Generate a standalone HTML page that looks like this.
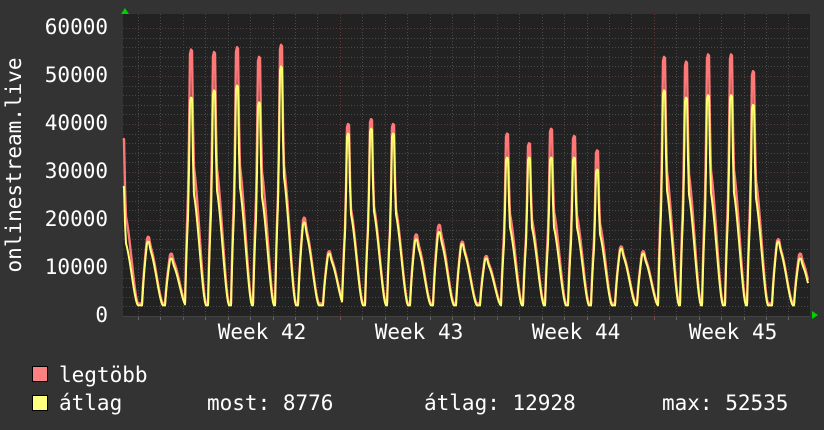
<!DOCTYPE html>
<html><head><meta charset="utf-8"><style>
html,body{margin:0;padding:0;background:#333;}
body{width:824px;height:430px;overflow:hidden;position:relative;font-family:"DejaVu Sans Mono","Liberation Mono",monospace;}
svg{position:absolute;left:0;top:0}
</style></head><body>
<svg id="g" width="824" height="430" xmlns="http://www.w3.org/2000/svg">
<rect x="0" y="0" width="824" height="430" fill="#333"/>
<rect x="123" y="14" width="687" height="302" fill="#222"/>
<g id="grid"></g>
<g id="data"></g>
<g fill="#fff" font-family="DejaVu Sans Mono, Liberation Mono, monospace" font-size="21">
<text x="108" y="34" text-anchor="end">60000</text>
<text x="108" y="82" text-anchor="end">50000</text>
<text x="108" y="130" text-anchor="end">40000</text>
<text x="108" y="178" text-anchor="end">30000</text>
<text x="108" y="226" text-anchor="end">20000</text>
<text x="108" y="274" text-anchor="end">10000</text>
<text x="108" y="322" text-anchor="end">0</text>
<text x="262" y="339" text-anchor="middle">Week 42</text>
<text x="419" y="339" text-anchor="middle">Week 43</text>
<text x="576" y="339" text-anchor="middle">Week 44</text>
<text x="733" y="339" text-anchor="middle">Week 45</text>
<text transform="translate(21,165) rotate(-90)" text-anchor="middle">onlinestream.live</text>
<text x="59" y="382">legtöbb</text>
<text x="59" y="410">átlag</text>
<text x="207" y="410">most: 8776</text>
<text x="424" y="410">átlag: 12928</text>
<text x="662" y="410">max: 52535</text>
</g>
<rect x="32.5" y="366.5" width="15" height="15" fill="#ff8080" stroke="#000"/>
<rect x="32.5" y="395.5" width="15" height="15" fill="#ffff80" stroke="#000"/>
<polygon points="125,8 121,14 129,14" fill="#00d000"/>
<polygon points="818,315 812,311 812,319" fill="#00d000"/>
</svg>
<script>
var NS="http://www.w3.org/2000/svg";
function el(p,t,a){var e=document.createElementNS(NS,t);for(var k in a)e.setAttribute(k,a[k]);p.appendChild(e);return e;}
var grid=document.getElementById('grid'),data=document.getElementById('data');
var sc=288/60000;function Y(v){return 316-v*sc;}
for(var v=2000;v<=60000;v+=2000){var y=Math.round(Y(v))+.5;el(grid,'line',{x1:123,x2:810,y1:y,y2:y,stroke:(v%10000==0)?'#5a3a3a':'#4a4a4a','stroke-dasharray':'1,2'});}
var weeks=[182,339,496,653];
for(var x=138;x<810;x+=22.43){var xx=Math.round(x)+.5;var maj=weeks.some(function(w){return Math.abs(w-x)<3});
el(grid,'line',{x1:xx,x2:xx,y1:14,y2:316,stroke:maj?'#6a3535':'#4a4a4a','stroke-dasharray':'1,2'});
el(grid,'line',{x1:xx,x2:xx,y1:316,y2:320,stroke:maj?'#a04040':'#666'});}
el(grid,'line',{x1:123,x2:810,y1:316.5,y2:316.5,stroke:'#444'});
var P=[[123,37000,27000],[148,16500,15500],[171,13000,12000],[191,55500,45500],[214,55000,47000],[237,56000,48000],[259,54000,44500],[281,56500,52000],[304,20500,19500],[329,13500,13000],[348,40000,38000],[371,41000,39000],[393,40000,38000],[416,17000,16000],[439,19000,17500],[462,15500,15000],[486,12500,12000],[507,38000,33000],[529,36000,33000],[551,39000,33000],[574,37500,33000],[597,34500,30500],[621,14500,14000],[643,13500,13000],[664,54000,47000],[686,53000,45500],[708,54500,46000],[731,54500,46000],[753,51000,44000],[778,16000,15500],[800,13000,12000],[822,12000,11000]];
function val(x,k,mn){var best=mn;for(var i=0;i<P.length;i++){var p=P[i],d=x-p[0],A=p[k];var big=A>25000;
var base=big?0.6*A:0.92*A,g=0;
if(d>=-6&&d<=0){g=Math.pow((1+Math.cos(Math.PI*d/6))/2,0.45);}
else if(d>0&&d<=15){g=(1+Math.cos(Math.PI*d/15))/2;g=Math.pow(g,0.8);}
var v=mn+(base-mn)*g;var ad=Math.abs(d);var s=ad<=1?1:Math.max(0,1-(ad-1)/1.5);v+=(A-base)*s;
if(v>best)best=v;}return best;}
function path(k,mn){var s='';for(var x=123;x<=808;x++){s+=(x==123?'M':'L')+x+','+Y(val(x,k,mn)).toFixed(1);}return s;}
el(data,'path',{d:path(1,2600),fill:'none',stroke:'#ff7878','stroke-width':2.4,'stroke-linejoin':'round'});
el(data,'path',{d:path(2,2200),fill:'none',stroke:'#ffff70','stroke-width':2,'stroke-linejoin':'round'});
</script>
</body></html>
